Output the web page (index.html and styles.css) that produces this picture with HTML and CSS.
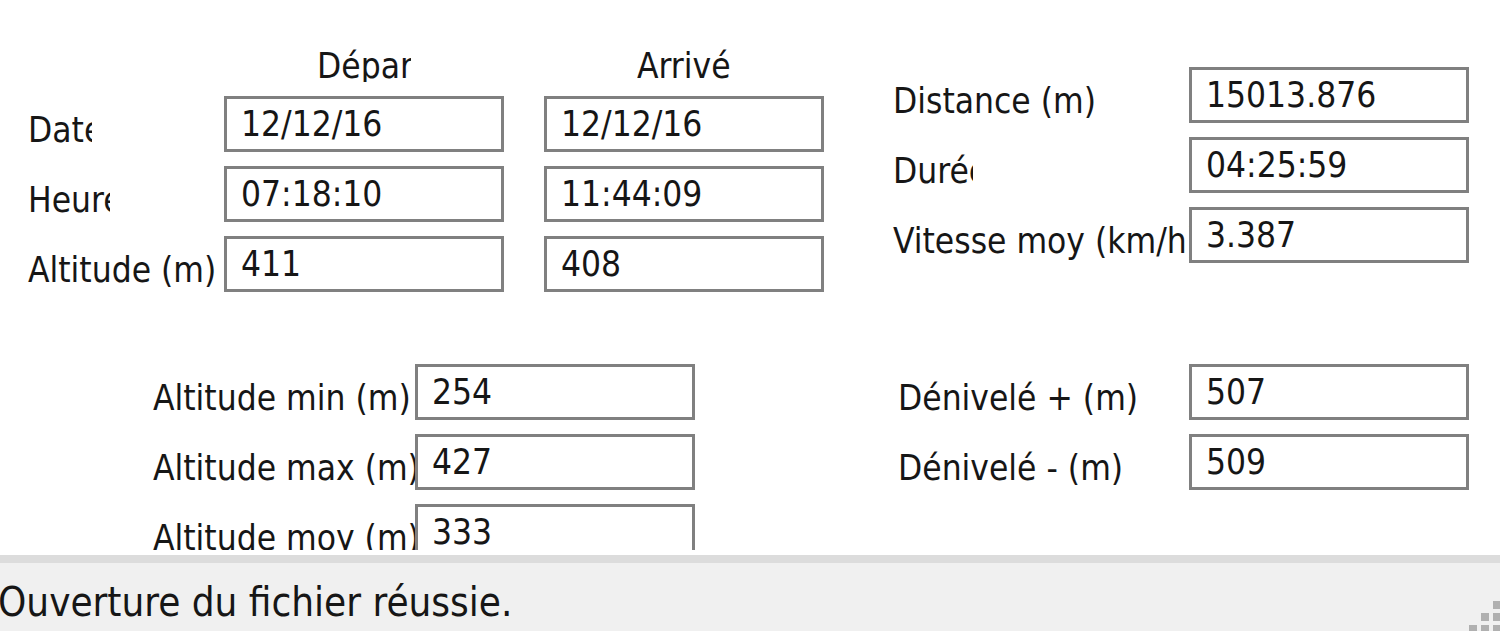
FILE: index.html
```html
<!DOCTYPE html>
<html lang="fr">
<head>
<meta charset="utf-8">
<title>Résumé du parcours</title>
<link rel="stylesheet" href="styles.css">
</head>
<body>
<div class="window">
  <div class="client">
    <div class="clip">
      <div class="upper">
        <div class="times">
          <div class="cell"></div>
          <div class="head">Départ</div>
          <div class="head">Arrivée</div>

          <div class="lbl w-date">Date</div>
          <div class="box">12/12/16</div>
          <div class="box">12/12/16</div>

          <div class="lbl w-heure">Heure</div>
          <div class="box">07:18:10</div>
          <div class="box">11:44:09</div>

          <div class="lbl">Altitude (m)</div>
          <div class="box">411</div>
          <div class="box">408</div>
        </div>

        <div class="summary">
          <div class="lbl">Distance (m)</div>
          <div class="box">15013.876</div>

          <div class="lbl w-duree">Durée</div>
          <div class="box">04:25:59</div>

          <div class="lbl">Vitesse moy (km/h)</div>
          <div class="box over">3.387</div>
        </div>
      </div>

      <div class="lower">
        <div class="alts">
          <div class="lbl">Altitude min (m)</div>
          <div class="box">254</div>
          <div class="lbl">Altitude max (m)</div>
          <div class="box">427</div>
          <div class="lbl">Altitude moy (m)</div>
          <div class="box">333</div>
        </div>
        <div class="denivs">
          <div class="lbl">Dénivelé + (m)</div>
          <div class="box">507</div>
          <div class="lbl">Dénivelé - (m)</div>
          <div class="box">509</div>
        </div>
      </div>
    </div>
  </div>
  <div class="status">
    <span class="status-text">Ouverture du fichier réussie.</span>
    <svg class="grip" width="34" height="34" viewBox="0 0 34 34" aria-hidden="true">
      <rect x="26" y="2" width="8" height="8" fill="#b0b0b0"/>
      <rect x="14" y="14" width="8" height="8" fill="#b0b0b0"/>
      <rect x="26" y="14" width="8" height="8" fill="#b0b0b0"/>
      <rect x="2" y="26" width="8" height="8" fill="#b0b0b0"/>
      <rect x="14" y="26" width="8" height="8" fill="#b0b0b0"/>
      <rect x="26" y="26" width="8" height="8" fill="#b0b0b0"/>
    </svg>
  </div>
</div>
</body>
</html>
```

FILE: styles.css
```css
html, body {
  margin: 0;
  padding: 0;
}

body {
  width: 1500px;
  height: 631px;
  overflow: hidden;
  background: #ffffff;
  color: #161616;
  font-family: "DejaVu Sans Condensed", "DejaVu Sans", sans-serif;
  font-stretch: condensed;
  font-size: 35px;
}

.window {
  display: flex;
  flex-direction: column;
  height: 631px;
}

.client {
  flex: none;
  height: 555px;
  background: #ffffff;
}

.clip {
  height: 550px;
  overflow: hidden;
}

.upper {
  display: flex;
  align-items: flex-start;
}

.times {
  display: grid;
  grid-template-columns: 156px 280px 280px;
  grid-template-rows: 34px 56px 56px 56px;
  column-gap: 40px;
  row-gap: 14px;
  padding: 48px 0 0 28px;
}

.summary {
  display: grid;
  grid-template-columns: 296px 280px;
  grid-template-rows: 56px 56px 56px;
  row-gap: 14px;
  padding-top: 67px;
  margin-left: 69px;
}

.head {
  justify-self: center;
  width: 94px;
  height: 34px;
  line-height: 37px;
  overflow: hidden;
  white-space: nowrap;
}

.lbl {
  display: flex;
  align-items: center;
  padding-top: 12px;
  box-sizing: border-box;
  white-space: nowrap;
  height: 56px;
}

.w-date { width: 64px; overflow: hidden; }
.w-heure { width: 82px; overflow: hidden; }
.w-duree { width: 80px; overflow: hidden; }

.box {
  box-sizing: border-box;
  height: 56px;
  width: 280px;
  border: 3px solid #808080;
  background: #ffffff;
  display: flex;
  align-items: center;
  padding-left: 14px;
  white-space: nowrap;
}

.over {
  position: relative;
}

.lower {
  display: flex;
  align-items: flex-start;
  padding-top: 72px;
}

.alts {
  display: grid;
  grid-template-columns: 262px 280px;
  grid-template-rows: 56px 56px 56px;
  row-gap: 14px;
  padding-left: 153px;
}

.denivs {
  display: grid;
  grid-template-columns: 291px 280px;
  grid-template-rows: 56px 56px;
  row-gap: 14px;
  margin-left: 203px;
}

.status {
  flex: 1;
  display: flex;
  align-items: center;
  background: #f0f0f0;
  border-top: 8px solid #dcdcdc;
}

.status-text {
  margin-left: -2px;
  font-size: 40px;
  padding-top: 10px;
  white-space: nowrap;
}

.grip {
  margin-left: auto;
  align-self: flex-end;
  margin-right: -1px;
  margin-bottom: -2px;
}
```
